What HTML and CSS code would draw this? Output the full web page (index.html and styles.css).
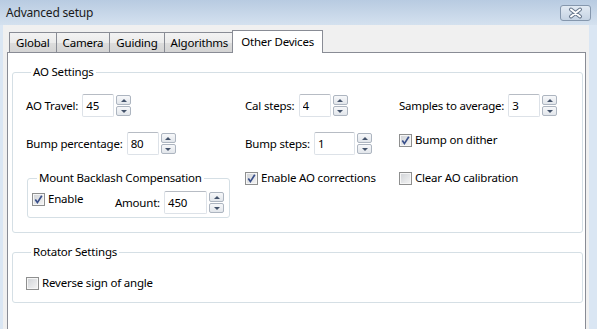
FILE: index.html
```html
<!DOCTYPE html>
<html lang="en">
<head>
    <meta charset="UTF-8">
    <title>Advanced setup</title>
    <link rel="stylesheet" href="styles.css">
</head>
<body>
<div class="window">
    <div class="titlebar">
        <span class="title">Advanced setup</span>
        <span class="close">
            <svg width="29" height="14" viewBox="0 0 29 14">
                <path d="M10 3.5 L19 10.5 M19 3.5 L10 10.5" stroke="#65758a" stroke-width="4" stroke-linecap="round"/>
                <path d="M10 3.5 L19 10.5 M19 3.5 L10 10.5" stroke="#fff" stroke-width="2" stroke-linecap="round"/>
            </svg>
        </span>
    </div>
    <div class="client">
        <!--标签页-->
        <div class="tabs">
            <span class="tab first">Global</span>
            <span class="tab">Camera</span>
            <span class="tab">Guiding</span>
            <span class="tab">Algorithms</span>
            <span class="tab current">Other Devices</span>
        </div>
        <div class="panel">
            <fieldset class="group ao">
                <legend>AO Settings</legend>
                <div class="ao-grid">
                    <label class="field">
                        <span>AO Travel:</span>
                        <input class="num" value="45">
                        <span class="spin"><b class="up"></b><b class="down"></b></span>
                    </label>
                    <label class="field">
                        <span>Cal steps:</span>
                        <input class="num" value="4">
                        <span class="spin"><b class="up"></b><b class="down"></b></span>
                    </label>
                    <label class="field">
                        <span>Samples to average:</span>
                        <input class="num" value="3">
                        <span class="spin"><b class="up"></b><b class="down"></b></span>
                    </label>

                    <label class="field">
                        <span>Bump percentage:</span>
                        <input class="num" value="80">
                        <span class="spin"><b class="up"></b><b class="down"></b></span>
                    </label>
                    <label class="field">
                        <span>Bump steps:</span>
                        <input class="num wide" value="1">
                        <span class="spin"><b class="up"></b><b class="down"></b></span>
                    </label>
                    <label class="check top">
                        <span class="box on"></span>
                        <span>Bump on dither</span>
                    </label>

                    <!--回差补偿-->
                    <fieldset class="group backlash">
                        <legend>Mount Backlash Compensation</legend>
                        <div class="backlash-row">
                            <label class="check top">
                                <span class="box on"></span>
                                <span>Enable</span>
                            </label>
                            <label class="field amount">
                                <span>Amount:</span>
                                <input class="num wider" value="450">
                                <span class="spin"><b class="up"></b><b class="down"></b></span>
                            </label>
                        </div>
                    </fieldset>
                    <label class="check top">
                        <span class="box on"></span>
                        <span>Enable AO corrections</span>
                    </label>
                    <label class="check top">
                        <span class="box"></span>
                        <span>Clear AO calibration</span>
                    </label>
                </div>
            </fieldset>

            <fieldset class="group rotator">
                <legend>Rotator Settings</legend>
                <label class="check">
                    <span class="box"></span>
                    <span>Reverse sign of angle</span>
                </label>
            </fieldset>
        </div>
    </div>
</div>
</body>
</html>
```
FILE: styles.css
```css
body {
    margin: 0;
    font-family: "Noto Sans", "Open Sans", sans-serif;
    font-size: 11.5px;
    letter-spacing: -0.2px;
    line-height: 16px;
    color: #000;
}

.window {
    width: 597px;
    height: 329px;
    display: flex;
    flex-direction: column;
    background: #dae6f3;
    overflow: hidden;
}

/* 标题栏 */
.titlebar {
    height: 25px;
    flex: none;
    display: flex;
    justify-content: space-between;
    padding: 0 6px;
    background: linear-gradient(#b8cbe1, #d4e1ef);
}

.title {
    font-size: 12px;
    line-height: 26px;
    color: #1a1a1a;
}

.close {
    width: 29px;
    height: 14px;
    margin-top: 5px;
    border: 1px solid #8597ad;
    border-radius: 3px;
    background: linear-gradient(#e2eaf3, #c5d3e3);
}

.close svg {
    display: block;
}

.client {
    flex: 1;
    display: flex;
    flex-direction: column;
    margin: 0 8px 0 3px;
    padding: 5px 3px 0 4px;
    background: #f0f0f0;
}

/* 标签页 */
.tabs {
    height: 22px;
    display: flex;
    align-items: flex-end;
    position: relative;
    z-index: 1;
}

.tab {
    height: 19px;
    line-height: 20px;
    padding: 0 6px;
    margin-right: -1px;
    border: 1px solid #898c95;
    border-bottom: none;
    background: linear-gradient(#f3f3f3, #ebebeb 50%, #dddddd 51%, #d4d4d4);
}

.tab.first {
    margin-left: 2px;
}

.tab.current {
    height: 22px;
    line-height: 21px;
    margin: 0 0 -1px -2px;
    padding: 0 8px;
    background: #fff;
}

.panel {
    flex: 1;
    padding: 11px 2px 0 4px;
    border: 1px solid #898c95;
    border-bottom: none;
    background: #fff;
}

/* 分组框 */
.group {
    margin: 0;
    min-width: 0;
    border: 1px solid #d5dfe5;
    border-radius: 3px;
}

.group legend {
    margin-left: 5px;
    padding: 0 2px;
    line-height: 16px;
}

.ao {
    padding: 14px 2px 14px 13px;
}

.ao-grid {
    display: grid;
    grid-template-columns: 219px 154px 1fr;
    row-gap: 15px;
    align-items: center;
}

.rotator {
    margin-top: 11px;
    padding: 15px 13px 11px 13px;
}

.backlash {
    width: 203px;
    box-sizing: border-box;
    margin-left: 1px;
    padding: 5px 5px 3px 4px;
}

.backlash-row {
    display: flex;
    align-items: center;
}

.amount {
    margin-left: auto;
}

/* 数字输入框 */
.field {
    display: flex;
    align-items: center;
}

.num {
    box-sizing: border-box;
    width: 32px;
    height: 23px;
    margin: 0 0 0 4px;
    padding: 0 3px;
    border: 1px solid #dde2e8;
    border-top-color: #b7bcc4;
    border-radius: 2px;
    font: inherit;
    letter-spacing: inherit;
    color: #000;
    outline: none;
}

.num.wide {
    width: 41px;
}

.num.wider {
    width: 43px;
}

.spin {
    display: flex;
    flex-direction: column;
    gap: 1px;
    margin-left: 2px;
}

.spin b {
    box-sizing: border-box;
    width: 15px;
    height: 10px;
    display: flex;
    align-items: center;
    justify-content: center;
    border: 1px solid #adb5c0;
    border-radius: 2px;
    background: linear-gradient(#f7f8fa, #e2e6eb);
}

.spin b::after {
    content: "";
    border-left: 3px solid transparent;
    border-right: 3px solid transparent;
}

.spin .up::after {
    border-bottom: 3px solid #44536b;
}

.spin .down::after {
    border-top: 3px solid #44536b;
}

/* 复选框 */
.check {
    display: flex;
    align-items: center;
    gap: 3px;
}

.check.top {
    align-self: start;
}

.box {
    box-sizing: border-box;
    width: 13px;
    height: 13px;
    border: 1px solid #8e8f8f;
    box-shadow: inset 0 0 0 1px #f6f6f6;
    background: linear-gradient(135deg, #cfd2d6, #f5f5f5);
}

.box.on {
    background: url("data:image/svg+xml,%3Csvg xmlns='http://www.w3.org/2000/svg' width='11' height='11'%3E%3Cpath d='M2.3 5.6 L4.4 8.6 L8.8 1.8' fill='none' stroke='%23394f8a' stroke-width='1.7'/%3E%3C/svg%3E") center no-repeat,
    linear-gradient(135deg, #cfd2d6, #f5f5f5);
}
```
